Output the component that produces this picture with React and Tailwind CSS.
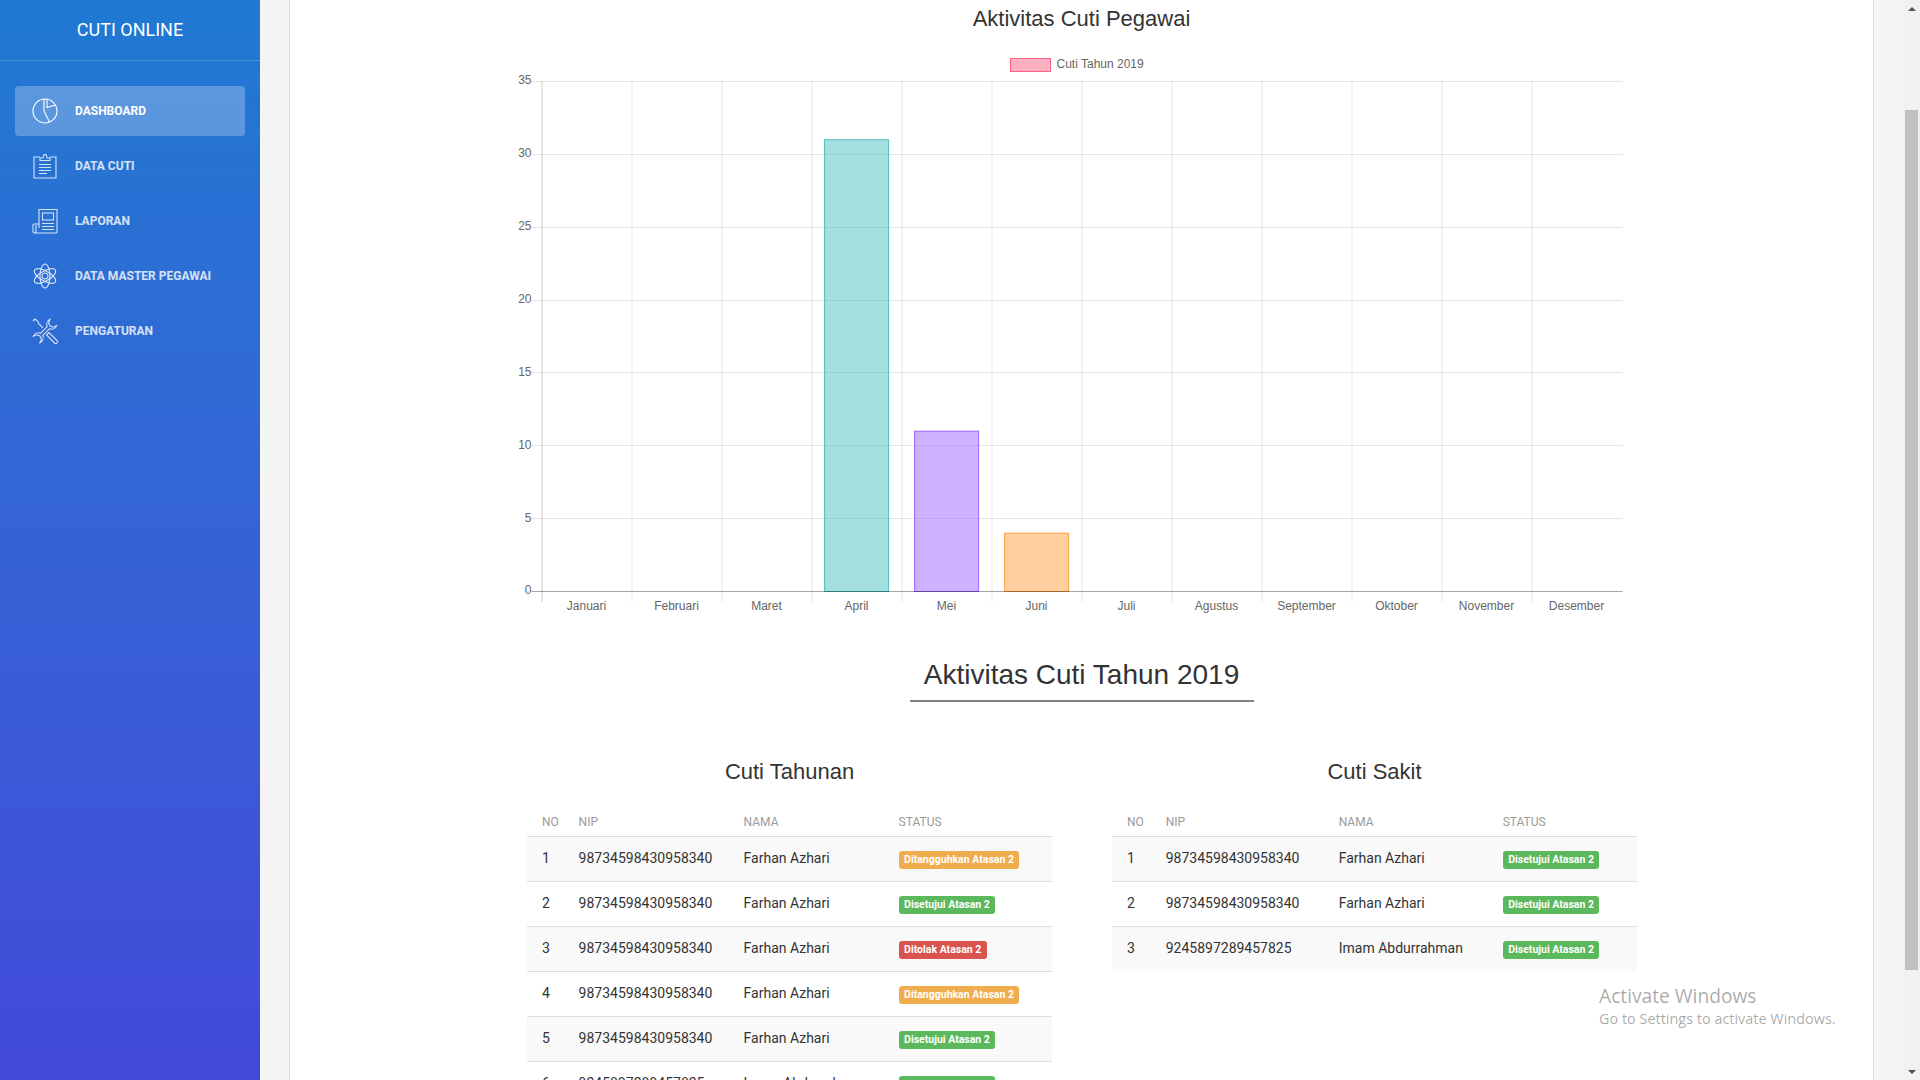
const menu = [
  { label: "Dashboard", icon: "pie", active: true },
  { label: "Data Cuti", icon: "clipboard" },
  { label: "Laporan", icon: "news" },
  { label: "Data Master Pegawai", icon: "atom" },
  { label: "Pengaturan", icon: "tools" },
];

const months = ["Januari", "Februari", "Maret", "April", "Mei", "Juni", "Juli", "Agustus", "September", "Oktober", "November", "Desember"];

const bars = [
  { month: 3, value: 31, fill: "rgba(75,192,192,0.5)", stroke: "rgb(75,192,192)" },
  { month: 4, value: 11, fill: "rgba(153,102,255,0.5)", stroke: "rgb(153,102,255)" },
  { month: 5, value: 4, fill: "rgba(255,159,64,0.5)", stroke: "rgb(255,159,64)" },
];

const tahunan = [
  ["1", "98734598430958340", "Farhan Azhari", "wait"],
  ["2", "98734598430958340", "Farhan Azhari", "ok"],
  ["3", "98734598430958340", "Farhan Azhari", "no"],
  ["4", "98734598430958340", "Farhan Azhari", "wait"],
  ["5", "98734598430958340", "Farhan Azhari", "ok"],
  ["6", "9245897289457825", "Imam Abdurrahman", "ok"],
];

const sakit = [
  ["1", "98734598430958340", "Farhan Azhari", "ok"],
  ["2", "98734598430958340", "Farhan Azhari", "ok"],
  ["3", "9245897289457825", "Imam Abdurrahman", "ok"],
];

const badges = {
  wait: { text: "Ditangguhkan Atasan 2", cls: "bg-[#f0ad4e]" },
  ok: { text: "Disetujui Atasan 2", cls: "bg-[#5cb85c]" },
  no: { text: "Ditolak Atasan 2", cls: "bg-[#d9534f]" },
};

function MenuIcon({ name }) {
  const wrenchHalf = "M11.940 11.940L15.200 8.700A6 6 0 0 1 18 1.200L16.500 5L18 8L21 9.200L24.700 7.800A6 6 0 0 1 17.300 10.800L14.060 14.060";
  return (
    <svg width="26" height="26" viewBox="0 0 26 26" fill="none" stroke="currentColor" strokeWidth="1.100" className="shrink-0">
      {name === "pie" && (
        <>
          <circle cx="13" cy="13" r="12" />
          <path d="M12 13V1M12 13l5.500 11M15 1.500v8l8.500-2.500" />
        </>
      )}
      {name === "clipboard" && (
        <>
          <path d="M8 4H2v21h22V4h-6" />
          <path d="M8 7.500V5h3l1-3.500h2l1 3.500h3v2.500z" />
          <path d="M7 11.500h12M7 14.500h12M7 17.500h12M7 20.500h8" />
        </>
      )}
      {name === "news" && (
        <>
          <path d="M7 20V1.500h18V24a1 1 0 0 1-1 1H3" />
          <path d="M7 16H2a1 1 0 0 0-1 1v6.500a1.500 1.500 0 0 0 3 0V17" />
          <rect x="10.500" y="5" width="11" height="7" />
          <path d="M10 15.500h12M10 18.500h12M10 21.500h12" />
        </>
      )}
      {name === "atom" && (
        <>
          <circle cx="13" cy="13" r="3" />
          <ellipse cx="13" cy="13" rx="12" ry="5" transform="rotate(30 13 13)" />
          <ellipse cx="13" cy="13" rx="12" ry="5" transform="rotate(-30 13 13)" />
          <ellipse cx="13" cy="13" rx="12" ry="5" transform="rotate(90 13 13)" />
        </>
      )}
      {name === "tools" && (
        <>
          <path d={wrenchHalf} />
          <path d={wrenchHalf} transform="rotate(180 13 13)" />
          <path d="M1 3l2-2 3 2.500.5 2L11 10" />
          <path d="M14.500 17l2.500-2.500 8 8a1.770 1.770 0 0 1-2.500 2.500z" />
        </>
      )}
    </svg>
  );
}

function Sidebar() {
  return (
    <aside className="w-[260px] shrink-0 h-full bg-gradient-to-b from-[#1e79d2] to-[#4249d9] text-white">
      <div className="h-[61px] flex items-center justify-center border-b border-white/20 pb-[1px] text-[18px]">
        CUTI ONLINE
      </div>
      <nav className="mt-[25px] px-[15px] flex flex-col gap-[5px]">
        {menu.map((item) => (
          <a
            key={item.label}
            className={`h-[50px] flex items-center gap-[17px] pl-[17px] rounded-[4px] text-[12px] font-bold uppercase ${item.active ? "bg-white/25 text-white" : "text-white/80"}`}
          >
            <MenuIcon name={item.icon} />
            {item.label}
          </a>
        ))}
      </nav>
    </aside>
  );
}

function Chart() {
  const left = 541;
  const right = 1622;
  const zero = 591.5;
  const stepX = 90;
  const unit = (591 - 81) / 35;

  return (
    <svg width="1140" height="584" viewBox="511.500 36 1140 584" className="mx-auto block [font-family:'Liberation_Sans',sans-serif]">
      <rect x="1010" y="58.500" width="40" height="13" fill="rgba(255,99,132,0.5)" stroke="rgb(255,99,132)" />
      <text x="1056" y="68" fontSize="12" fill="#666">Cuti Tahun 2019</text>

      {[5, 10, 15, 20, 25, 30, 35].map((v) => {
        const y = Math.round(591 - v * unit) + 0.5;
        return <line key={v} x1="531" x2={right} y1={y} y2={y} stroke="rgba(0,0,0,0.1)" />;
      })}
      {months.map((m, i) => {
        const x = Math.round(left + i * stepX) + 0.5;
        return <line key={i} x1={x} x2={x} y1="81" y2="602" stroke={i === 0 ? "rgba(0,0,0,0.2)" : "rgba(0,0,0,0.1)"} />;
      })}

      {bars.map((b) => {
        const x = left + b.month * stepX + 12.6;
        const h = b.value * unit;
        return <rect key={b.month} x={x + 0.5} y={zero - h} width="64" height={h} fill={b.fill} stroke={b.stroke} />;
      })}
      <line x1="531" x2={right} y1={zero} y2={zero} stroke="rgba(0,0,0,0.35)" />

      {[0, 5, 10, 15, 20, 25, 30, 35].map((v) => (
        <text key={v} x="531" y={Math.round(591 - v * unit + 0.4) + 3} textAnchor="end" fontSize="12" fill="#666">{v}</text>
      ))}
      {months.map((m, i) => (
        <text key={m} x={left + (i + 0.5) * stepX} y="610" textAnchor="middle" fontSize="12" fill="#666">{m}</text>
      ))}
    </svg>
  );
}

function CutiTable({ title, rows, widths }) {
  return (
    <div className="w-[525px] shrink-0">
      <h4 className="h-[30px] leading-[30px] text-center text-[22px] text-[#333] [font-family:'Liberation_Sans',sans-serif]">{title}</h4>
      <table className="mt-[19px] w-full table-fixed border-collapse text-[14px] text-[#333]">
        <colgroup>
          {widths.map((w, i) => (
            <col key={i} style={{ width: w }} />
          ))}
        </colgroup>
        <thead>
          <tr className="h-[30px] border-b border-[#ddd]">
            {["No", "NIP", "Nama", "Status"].map((h) => (
              <th key={h} className="pl-[15px] pt-[2px] text-left text-[12px] font-normal uppercase text-[#9a9a9a]">{h}</th>
            ))}
          </tr>
        </thead>
        <tbody>
          {rows.map((r, i) => (
            <tr key={r[0]} className={`h-[45px] ${i < rows.length - 1 ? "border-b border-[#ddd]" : ""} ${i % 2 === 0 ? "bg-[#f9f9f9]" : "bg-white"}`}>
              <td className="pl-[15px]">{r[0]}</td>
              <td className="pl-[15px]">{r[1]}</td>
              <td className="pl-[15px]">{r[2]}</td>
              <td className="pl-[15px]">
                <span className={`inline-block h-[18px] leading-[17px] px-[5.500px] rounded-[3px] text-[10.500px] font-bold text-white whitespace-nowrap ${badges[r[3]].cls}`}>
                  {badges[r[3]].text}
                </span>
              </td>
            </tr>
          ))}
        </tbody>
      </table>
    </div>
  );
}

function Scrollbar() {
  return (
    <div className="w-[17px] shrink-0 h-full bg-[#f1f1f1] flex flex-col items-center">
      <div className="h-[17px] flex items-center justify-center">
        <div className="w-0 h-0 border-x-[4px] border-x-transparent border-b-[4px] border-b-[#505050]" />
      </div>
      <div className="mt-[93px] w-[13px] h-[860px] bg-[#c1c1c1]" />
      <div className="mt-auto h-[17px] flex items-center justify-center">
        <div className="w-0 h-0 border-x-[4px] border-x-transparent border-t-[4px] border-t-[#505050]" />
      </div>
    </div>
  );
}

export default function App() {
  return (
    <div className="relative h-screen flex overflow-hidden bg-white [font-family:Roboto,sans-serif]">
      <Sidebar />

      <main className="flex-1 h-full bg-[#f5f5f5] px-[29px] overflow-hidden">
        <div className="h-full bg-white border-x border-[#ddd] overflow-hidden">
          <h3 className="h-[36px] pt-[1px] leading-[36px] text-center text-[22px] text-[#333] [font-family:'Liberation_Sans',sans-serif]">Aktivitas Cuti Pegawai</h3>
          <Chart />

          <h2 className="mt-[35px] w-[344px] mx-auto h-[47px] leading-[40px] border-b-2 border-[#808080] text-center text-[28px] text-[#333] [font-family:'Liberation_Sans',sans-serif]">
            Aktivitas Cuti Tahun 2019
          </h2>

          <div className="mt-[55px] ml-[237px] w-[1110px] flex gap-[60px]">
            <CutiTable title="Cuti Tahunan" rows={tahunan} widths={["36.6px", "165px", "155px", "168.4px"]} />
            <CutiTable title="Cuti Sakit" rows={sakit} widths={["38.7px", "173px", "164px", "149.3px"]} />
          </div>
        </div>
      </main>

      <Scrollbar />

      {/* windows watermark */}
      <div className="absolute left-[1599px] top-[982px] text-[#000]/35 [font-family:'Open_Sans',sans-serif] pointer-events-none">
        <div className="text-[19.200px] leading-[27px]">Activate Windows</div>
        <div className="text-[14.450px] leading-[20px]">Go to Settings to activate Windows.</div>
      </div>
    </div>
  );
}
